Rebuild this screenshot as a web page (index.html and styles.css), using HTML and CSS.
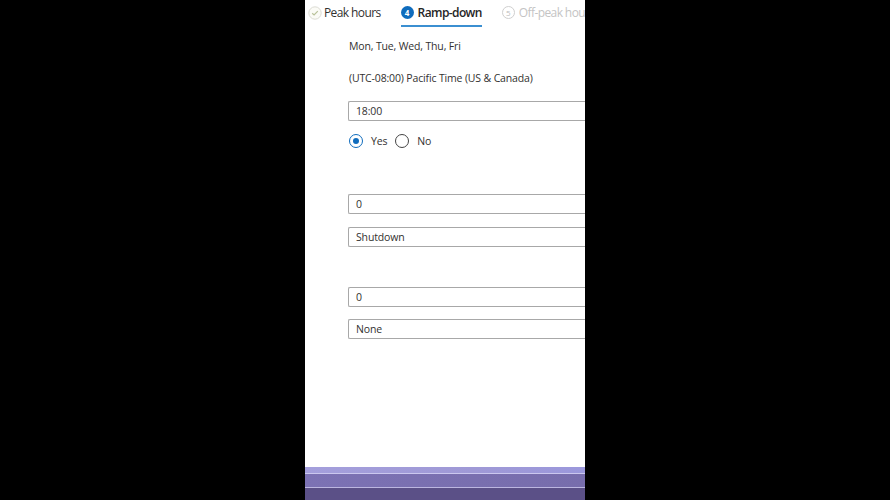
FILE: index.html
```html
<!DOCTYPE html>
<html>
<head>
<meta charset="utf-8">
<link rel="stylesheet" href="styles.css">
</head>
<body>
<div class="stage">
  <div class="panel">
    <div class="tabs">
      <div class="tab done">
        <svg class="ico" width="14" height="14" viewBox="0 0 14 14"><circle cx="7" cy="7" r="6.2" fill="#fbfbf6" stroke="#dcdcd4" stroke-width="1"/><path d="M4.2 7.2 L6.1 9 L9.8 5.2" fill="none" stroke="#b9c29a" stroke-width="1.2"/></svg>
        <span>Peak hours</span>
      </div>
      <div class="tab active">
        <span class="num">4</span>
        <span>Ramp-down</span>
      </div>
      <div class="tab todo">
        <span class="num">5</span>
        <span>Off-peak hours</span>
      </div>
    </div>
    <div class="form">
      <div class="line l1">Mon, Tue, Wed, Thu, Fri</div>
      <div class="line l2">(UTC-08:00) Pacific Time (US &amp; Canada)</div>
      <div class="box b1">18:00</div>
      <div class="radios">
        <span class="radio on"></span><span class="rl">Yes</span>
        <span class="radio"></span><span class="rl">No</span>
      </div>
      <div class="box b2">0</div>
      <div class="box b3">Shutdown</div>
      <div class="box b4">0</div>
      <div class="box b5">None</div>
    </div>
  </div>
  <div class="bands">
    <div class="band a"></div>
    <div class="band s1"></div>
    <div class="band b"></div>
    <div class="band s2"></div>
    <div class="band c"></div>
  </div>
</div>
</body>
</html>
```
FILE: styles.css
```css
html, body { margin: 0; padding: 0; background: #000; }
body { width: 890px; height: 500px; overflow: hidden; font-family: "Open Sans", "Noto Sans", sans-serif; color: #323130; }
.stage { margin-left: 305px; width: 280px; }
.panel { background: #fff; height: 467px; overflow: hidden; }
.tabs { display: flex; height: 27px; white-space: nowrap; font-size: 12px; letter-spacing: -0.6px; overflow: hidden; }
.tab { display: flex; align-items: center; height: 25px; gap: 4px; flex-shrink: 0; }
.tab.done { margin-left: 3px; gap: 2px; color: #323130; }
.tab.active { margin-left: 20px; border-bottom: 2px solid #3b8fd1; font-weight: 600; color: #252525; }
.tab.todo { margin-left: 20px; color: #c4c4c4; }
.num { width: 13px; height: 13px; border-radius: 50%; font-size: 8px; font-weight: 700; display: inline-flex; align-items: center; justify-content: center; box-sizing: border-box; letter-spacing: 0; }
.active .num { background: #0f6cbd; color: #fff; }
.todo .num { border: 1px solid #cfcfcf; color: #bdbdbd; font-weight: 400; }
.form { padding-left: 43px; font-size: 10.5px; letter-spacing: -0.15px; }
.line { padding-left: 1px; height: 14px; line-height: 14px; }
.l1 { margin-top: 12px; }
.l2 { margin-top: 18px; }
.box { height: 20px; box-sizing: border-box; border: 1px solid #a8a8a8; border-right: none; border-radius: 2px 0 0 2px; line-height: 18px; padding-left: 7px; }
.b1 { margin-top: 16px; }
.b2 { margin-top: 45px; }
.b3 { margin-top: 13px; }
.b4 { margin-top: 40px; }
.b5 { margin-top: 12px; }
.radios { display: flex; align-items: center; margin-top: 12px; height: 16px; padding-left: 1px; }
.radio { width: 14px; height: 14px; box-sizing: border-box; border-radius: 50%; border: 1px solid #444; position: relative; }
.radio.on { border-color: #0f6cbd; }
.radio.on::after { content: ""; position: absolute; left: 3px; top: 3px; width: 6px; height: 6px; border-radius: 50%; background: #0f6cbd; }
.rl { margin-left: 8px; margin-right: 8px; }
.bands { display: flex; flex-direction: column; }
.band.a { height: 6px; background: linear-gradient(90deg, #a49fdc, #9f99d6 60%, #9b98dc); }
.band.s1 { height: 1px; background: #cbc7ef; }
.band.b { height: 13px; background: linear-gradient(90deg, #7c72b4, #776dac); }
.band.s2 { height: 1px; background: #bcb6e0; }
.band.c { height: 12px; background: #5b5087; }
```
